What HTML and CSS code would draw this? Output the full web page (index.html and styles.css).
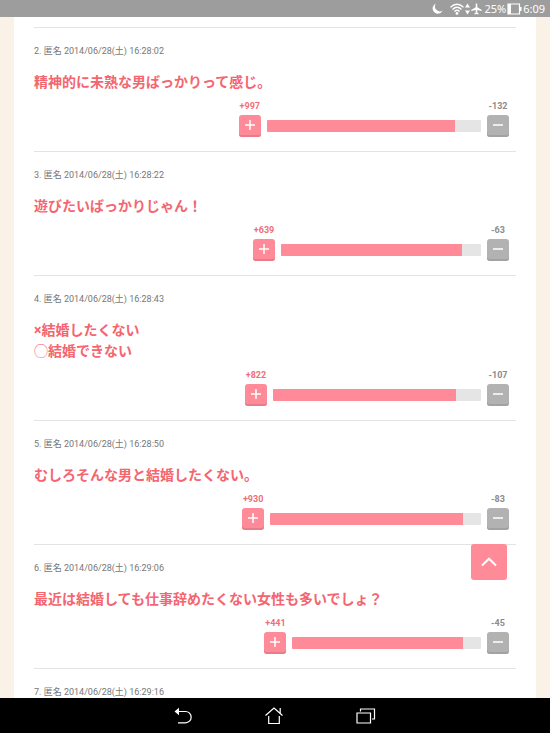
FILE: index.html
```html
<!DOCTYPE html>
<html lang="ja">
<head>
<meta charset="utf-8">
<meta name="viewport" content="width=device-width, initial-scale=1">
<title>コメント</title>
<link rel="stylesheet" href="styles.css">
</head>
<body>
<header class="status">
  <svg class="moon" width="11" height="11" viewBox="0 0 11 11"><path d="M4 0.4A5.3 5.3 0 1 0 10.7 7.6A5 5 0 0 1 4 0.4Z" fill="#fff"/></svg>
  <svg width="14" height="12" viewBox="0 0 14 12" fill="none" stroke="#fff" stroke-width="1.3"><path d="M0.5 4.2Q7-1.8 13.5 4.2M2.5 6.4Q7 2.2 11.5 6.4M4.4 8.5Q7 6 9.6 8.5"/><circle cx="7" cy="10.4" r="1.4" fill="#fff" stroke="none"/></svg>
  <svg width="5" height="12" viewBox="0 0 5 12" fill="#fff"><path d="M2.5 0.5L5 4.5H0ZM2.5 11.5L5 7.5H0Z"/></svg>
  <svg class="plane" width="11" height="12" viewBox="0 0 11 12" fill="#fff"><path d="M5.5 0.3Q6.3 0.6 6.3 1.8V4.3L10.8 7V8.1L6.3 6.9V9.6L7.7 10.7V11.5L5.5 11L3.3 11.5V10.7L4.7 9.6V6.9L0.2 8.1V7L4.7 4.3V1.8Q4.7 0.6 5.5 0.3Z"/></svg>
  <span>25%</span>
  <svg width="15" height="12" viewBox="0 0 15 12"><path d="M1 1H12.5V11H1Z" fill="none" stroke="#fff" stroke-width="1.2"/><path d="M1 1H4V11H1ZM13 4H14.5V8H13Z" fill="#fff"/></svg>
  <span class="clock">6:09</span>
</header>

<main class="page">
  <ol class="comments">
    <li class="comment">
      <p class="meta">2. 匿名 2014/06/28(土) 16:28:02</p>
      <p class="text">精神的に未熟な男ばっかりって感じ。</p>
      <div class="votes">
        <div class="vote plus"><span>+997</span><button type="button" aria-label="プラス"><svg width="12" height="12" viewBox="0 0 12 12"><path d="M6 1V11M1 6H11"/></svg></button></div>
        <div class="track" style="width:45.1%"><div class="fill" style="width:87.8%"></div></div>
        <div class="vote minus"><span>-132</span><button type="button" aria-label="マイナス"><svg width="12" height="12" viewBox="0 0 12 12"><path d="M1 6H11"/></svg></button></div>
      </div>
    </li>
    <li class="comment">
      <p class="meta">3. 匿名 2014/06/28(土) 16:28:22</p>
      <p class="text">遊びたいばっかりじゃん！</p>
      <div class="votes">
        <div class="vote plus"><span>+639</span><button type="button" aria-label="プラス"><svg width="12" height="12" viewBox="0 0 12 12"><path d="M6 1V11M1 6H11"/></svg></button></div>
        <div class="track" style="width:42.1%"><div class="fill" style="width:90.6%"></div></div>
        <div class="vote minus"><span>-63</span><button type="button" aria-label="マイナス"><svg width="12" height="12" viewBox="0 0 12 12"><path d="M1 6H11"/></svg></button></div>
      </div>
    </li>
    <li class="comment">
      <p class="meta">4. 匿名 2014/06/28(土) 16:28:43</p>
      <p class="text">×結婚したくない<br><span class="ring">◯</span>結婚できない</p>
      <div class="votes">
        <div class="vote plus"><span>+822</span><button type="button" aria-label="プラス"><svg width="12" height="12" viewBox="0 0 12 12"><path d="M6 1V11M1 6H11"/></svg></button></div>
        <div class="track" style="width:43.8%"><div class="fill" style="width:88%"></div></div>
        <div class="vote minus"><span>-107</span><button type="button" aria-label="マイナス"><svg width="12" height="12" viewBox="0 0 12 12"><path d="M1 6H11"/></svg></button></div>
      </div>
    </li>
    <li class="comment">
      <p class="meta">5. 匿名 2014/06/28(土) 16:28:50</p>
      <p class="text">むしろそんな男と結婚したくない。</p>
      <div class="votes">
        <div class="vote plus"><span>+930</span><button type="button" aria-label="プラス"><svg width="12" height="12" viewBox="0 0 12 12"><path d="M6 1V11M1 6H11"/></svg></button></div>
        <div class="track" style="width:44.4%"><div class="fill" style="width:91.3%"></div></div>
        <div class="vote minus"><span>-83</span><button type="button" aria-label="マイナス"><svg width="12" height="12" viewBox="0 0 12 12"><path d="M1 6H11"/></svg></button></div>
      </div>
    </li>
    <li class="comment">
      <p class="meta">6. 匿名 2014/06/28(土) 16:29:06</p>
      <p class="text">最近は結婚しても仕事辞めたくない女性も多いでしょ？</p>
      <div class="votes">
        <div class="vote plus"><span>+441</span><button type="button" aria-label="プラス"><svg width="12" height="12" viewBox="0 0 12 12"><path d="M6 1V11M1 6H11"/></svg></button></div>
        <div class="track" style="width:39.7%"><div class="fill" style="width:90.5%"></div></div>
        <div class="vote minus"><span>-45</span><button type="button" aria-label="マイナス"><svg width="12" height="12" viewBox="0 0 12 12"><path d="M1 6H11"/></svg></button></div>
      </div>
    </li>
    <li class="comment">
      <p class="meta">7. 匿名 2014/06/28(土) 16:29:16</p>
    </li>
  </ol>
</main>

<button type="button" class="to-top" aria-label="ページの先頭へ"><svg width="16" height="10" viewBox="0 0 16 10"><path d="M1 8.5L8 1.7L15 8.5"/></svg></button>

<nav class="navbar">
  <button type="button" aria-label="戻る"><svg width="18" height="18" viewBox="0 0 18 18"><path d="M4 4.5H11.5A5.3 5.3 0 0 1 11.5 15.8H4"/><path class="arrow" d="M0.5 4.5L5 0.8V8.2Z"/></svg></button>
  <button type="button" aria-label="ホーム"><svg width="18" height="18" viewBox="0 0 18 18"><path d="M0.5 8.5L9 1L17.5 8.5M15.2 6.3V1M3.7 9V16.5H14.3V9"/></svg></button>
  <button type="button" aria-label="アプリ履歴"><svg width="20" height="18" viewBox="0 0 20 18"><path d="M1 6H14.5V16H1ZM4.5 4.5V2H18.5V12H16"/></svg></button>
</nav>
</body>
</html>
```
FILE: styles.css
```css
* { box-sizing: border-box; }

body {
  margin: 0;
  height: 100vh;
  display: flex;
  flex-direction: column;
  background: #faf1e7;
  font-family: Roboto, "Noto Sans CJK JP", sans-serif;
}

button {
  padding: 0;
  border: 0;
  display: flex;
  align-items: center;
  justify-content: center;
}

.status {
  flex: none;
  height: 17px;
  padding: 0 5px;
  display: flex;
  align-items: center;
  justify-content: flex-end;
  gap: 1px;
  background: #9d9d9d;
  color: #fff;
  font: 11px/17px "Noto Sans", sans-serif;
}
.moon { margin-right: 6px; }
.plane { margin-right: 1px; }

.page {
  flex: 1;
  min-height: 0;
  overflow: hidden;
  margin: 0 14px;
  padding: 10px 20px 0;
  background: #fff;
}
.comments {
  margin: 0;
  padding: 0;
  list-style: none;
  border-top: 1px solid #e3e3e3;
}
.comment {
  padding: 16px 0 14px;
  border-bottom: 1px solid #e3e3e3;
}
.meta {
  margin: 0;
  font-size: 9px;
  line-height: 14px;
  color: #777;
}
.text {
  margin: 14px 0 7px;
  font-size: 14px;
  line-height: 21px;
  font-weight: 700;
  color: #f4656f;
}
.ring { font-weight: 400; }

.votes {
  margin-right: 7px;
  display: flex;
  align-items: flex-end;
  justify-content: flex-end;
  gap: 6px;
}
.vote {
  width: 22px;
  display: flex;
  flex-direction: column;
  align-items: center;
  gap: 3px;
  font-size: 9px;
  line-height: 12px;
  font-weight: 700;
}
.vote button {
  width: 22px;
  height: 22px;
  padding-bottom: 2px;
  border-radius: 3px;
}
.vote path { fill: none; stroke: #fff; stroke-width: 1.5; }
.plus { color: #ee6f79; }
.plus button { background: #ff8b98; box-shadow: inset 0 -2px #e87d89; }
.minus { color: #8c8c8c; }
.minus button { background: #b2b2b2; box-shadow: inset 0 -2px #a2a2a2; }
.track {
  height: 12px;
  margin-bottom: 5px;
  border-radius: 1px;
  background: #e5e5e5;
  overflow: hidden;
}
.fill { height: 100%; background: #ff8b98; }

.to-top {
  position: fixed;
  right: 43px;
  bottom: 153px;
  width: 36px;
  height: 36px;
  border-radius: 3px;
  background: #ff8b98;
}
.to-top path { fill: none; stroke: #fff; stroke-width: 2; }

.navbar {
  flex: none;
  height: 35px;
  display: flex;
  align-items: center;
  justify-content: center;
  gap: 73px;
  background: #000;
}
.navbar button { background: none; }
.navbar path { fill: none; stroke: #fff; stroke-width: 1.2; }
.navbar .arrow { fill: #fff; stroke: none; }
```
